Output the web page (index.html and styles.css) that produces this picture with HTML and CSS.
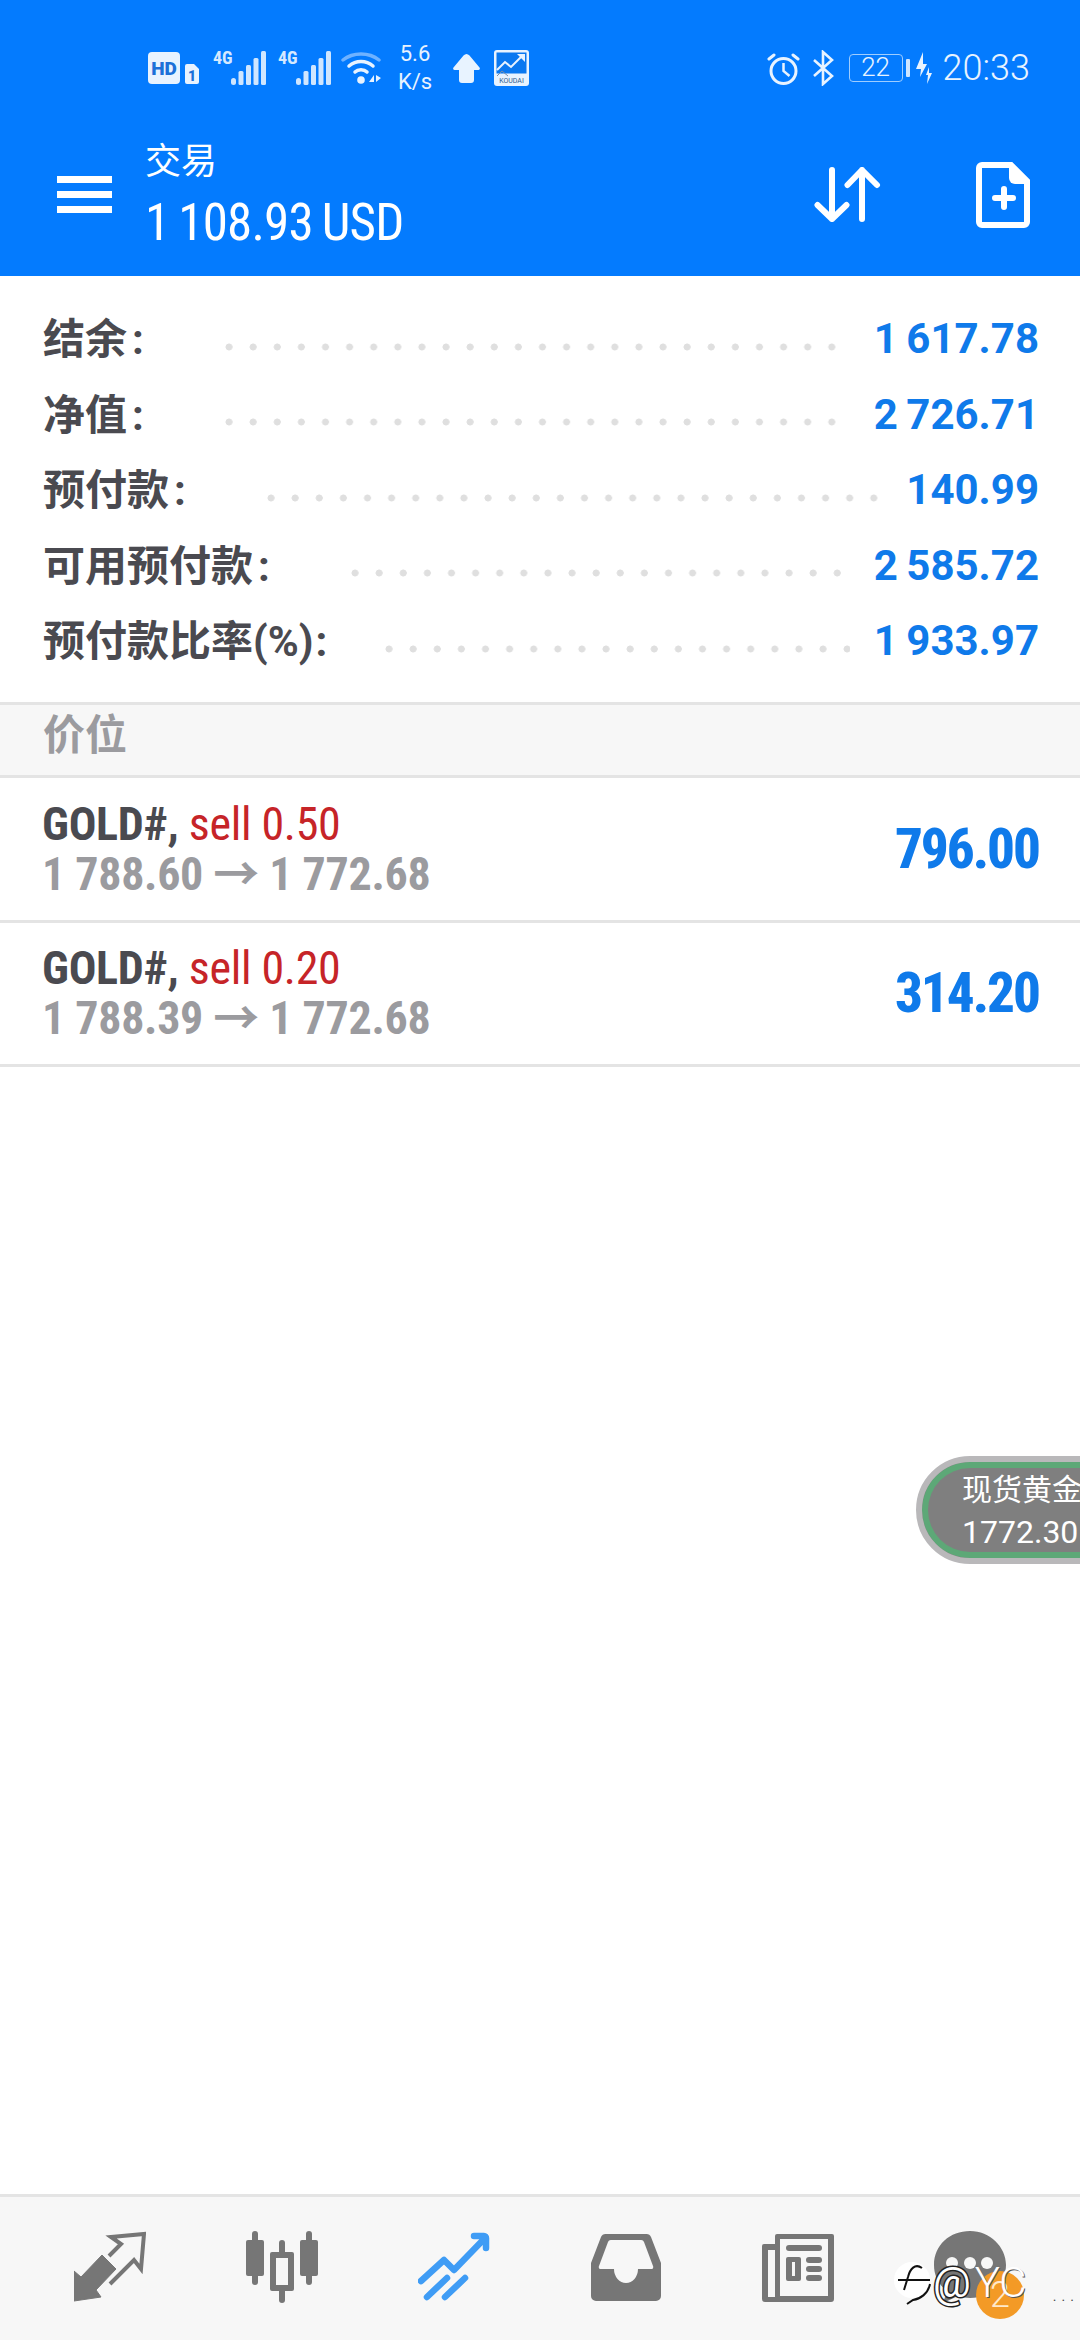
FILE: index.html
```html
<!DOCTYPE html>
<html>
  <head>
    <meta charset="UTF-8" />
    <link rel="stylesheet" href="styles.css">
  </head>
  <body>
    <div class="app">
      <div class="top-bar">
        <div class="status-bar">
          <div class="status-left">
            <svg class="ic-hd" viewBox="0 0 51 32">
              <rect x="0" y="0" width="32" height="32" rx="4" fill="#e8f3ff"/>
              <text x="16" y="23" class="hd-text">HD</text>
              <path d="M39 12h7l5 5v13a2 2 0 0 1-2 2H39a2 2 0 0 1-2-2V14a2 2 0 0 1 2-2z" fill="#e8f3ff"/>
              <text x="44" y="29" class="sim-text">1</text>
            </svg>
            <div class="signal">
              <span class="net">4G</span>
              <svg class="ic-bars" viewBox="0 0 35 34">
                <g fill="#cfe6ff">
                  <rect x="0" y="27" width="5" height="7" rx="2.5"/>
                  <rect x="7.5" y="20" width="5" height="14" rx="1.5"/>
                  <rect x="15" y="14" width="5" height="20" rx="1.5"/>
                  <rect x="22.5" y="7" width="5" height="27" rx="1.5"/>
                  <rect x="30" y="0" width="5" height="34" rx="1.5"/>
                </g>
              </svg>
            </div>
            <div class="signal">
              <span class="net">4G</span>
              <svg class="ic-bars" viewBox="0 0 35 34">
                <g fill="#cfe6ff">
                  <rect x="0" y="27" width="5" height="7" rx="2.5"/>
                  <rect x="7.5" y="20" width="5" height="14" rx="1.5"/>
                  <rect x="15" y="14" width="5" height="20" rx="1.5"/>
                  <rect x="22.5" y="7" width="5" height="27" rx="1.5"/>
                  <rect x="30" y="0" width="5" height="34" rx="1.5"/>
                </g>
              </svg>
            </div>
            <svg class="ic-wifi" viewBox="0 0 40 34">
              <path d="M2 9C12 1 28 1 38 9" fill="none" stroke="#6fb2ff" stroke-width="3.5" stroke-linecap="round"/>
              <path d="M8 15C15 9 25 9 32 15" fill="none" stroke="#e8f3ff" stroke-width="3.5" stroke-linecap="round"/>
              <path d="M14 21C17 18 23 18 26 21" fill="none" stroke="#e8f3ff" stroke-width="3.5" stroke-linecap="round"/>
              <circle cx="20" cy="29" r="3.8" fill="#e8f3ff"/>
              <path d="M28 31l5-7v7zM35 24l5 3-5 4z" fill="#e8f3ff"/>
            </svg>
            <div class="speed">5.6<br>K/s</div>
            <svg class="ic-up" viewBox="0 0 27 29">
              <path d="M13.5 0c1 0 2 .5 3 1.500l10 12c.8 1 .3 2.500-1 2.500H21v10a3 3 0 0 1-3 3H9a3 3 0 0 1-3-3V16H1.500c-1.300 0-1.800-1.500-1-2.500l10-12c1-1 2-1.500 3-1.500z" fill="#e8f3ff"/>
            </svg>
            <svg class="ic-koudai" viewBox="0 0 35 36">
              <rect x="0" y="0" width="35" height="36" rx="3" fill="#e8f3ff"/>
              <rect x="2.500" y="2.500" width="30" height="21" fill="#0a78f0"/>
              <path d="M3 20l8-8 6 5 12-12" fill="none" stroke="#e8f3ff" stroke-width="2"/>
              <path d="M23 4h8v8z" fill="#e8f3ff"/>
              <path d="M3 26l5-5 6 5" fill="none" stroke="#7a8ea6" stroke-width="1"/>
              <text x="17.500" y="33" class="koudai-text">KOUDAI</text>
            </svg>
          </div>
          <div class="status-right">
            <svg class="ic-alarm" viewBox="0 0 33 33">
              <circle cx="16.500" cy="19" r="12.500" fill="none" stroke="#e8f3ff" stroke-width="3"/>
              <path d="M16.500 11v8l6 5" fill="none" stroke="#e8f3ff" stroke-width="2.500"/>
              <path d="M2 7l5-4M31 7l-5-4" stroke="#e8f3ff" stroke-width="3" stroke-linecap="round"/>
            </svg>
            <svg class="ic-bt" viewBox="0 0 22 36">
              <path d="M2 10l18 16-9 8V2l9 8L2 26" fill="none" stroke="#e8f3ff" stroke-width="2.600"/>
            </svg>
            <div class="battery">
              <div class="battery-box">22</div>
              <div class="battery-cap"></div>
            </div>
            <svg class="ic-bolt" viewBox="0 0 17 32">
              <path d="M8 0L1 17h5l-1 8 7-13H8z" fill="#e8f3ff"/>
              <path d="M14 15l-3 8h2l-1 9 5-11h-3z" fill="#e8f3ff"/>
            </svg>
            <div class="clock">20:33</div>
          </div>
        </div>
        <div class="toolbar">
          <div class="menu-btn">
            <span></span><span></span><span></span>
          </div>
          <div class="toolbar-title">
            <div class="toolbar-name">交易</div>
            <div class="toolbar-sub"><span class="narrow">1 108.93 USD</span></div>
          </div>
          <div class="toolbar-actions">
            <svg class="ic-sort" viewBox="0 0 67 55">
              <path d="M18 3v49M3.500 38 18 52 32.500 38M48 52V3M33.500 18 48 3l15 15" fill="none" stroke="#fff" stroke-width="6" stroke-linecap="round" stroke-linejoin="round"/>
            </svg>
            <svg class="ic-doc" viewBox="0 0 54 66">
              <path d="M6 3h29l16 16v41a3 3 0 0 1-3 3H6a3 3 0 0 1-3-3V6a3 3 0 0 1 3-3z" fill="none" stroke="#fff" stroke-width="6"/>
              <path d="M33 2l20 20H39a6 6 0 0 1-6-6z" fill="#fff"/>
              <path d="M28 27v18M19 36h18" stroke="#fff" stroke-width="6" stroke-linecap="round"/>
            </svg>
          </div>
        </div>
      </div>

      <div class="summary">
        <div class="summary-row">
          <div class="summary-label">结余<span class="colon">:</span></div>
          <div class="dots"></div>
          <div class="summary-value">1 617.78</div>
        </div>
        <div class="summary-row">
          <div class="summary-label">净值<span class="colon">:</span></div>
          <div class="dots"></div>
          <div class="summary-value">2 726.71</div>
        </div>
        <div class="summary-row">
          <div class="summary-label">预付款<span class="colon">:</span></div>
          <div class="dots"></div>
          <div class="summary-value">140.99</div>
        </div>
        <div class="summary-row">
          <div class="summary-label">可用预付款<span class="colon">:</span></div>
          <div class="dots"></div>
          <div class="summary-value">2 585.72</div>
        </div>
        <div class="summary-row">
          <div class="summary-label">预付款比率(%)<span class="colon-tight">:</span></div>
          <div class="dots dots-tight"></div>
          <div class="summary-value">1 933.97</div>
        </div>
      </div>

      <div class="section-head">价位</div>

      <div class="position">
        <div class="position-info">
          <div class="position-title"><span class="narrow"><b>GOLD#,</b> <span class="sell">sell 0.50</span></span></div>
          <div class="position-price"><span class="narrow">1 788.60 → 1 772.68</span></div>
        </div>
        <div class="position-profit"><span class="narrow">796.00</span></div>
      </div>
      <div class="position">
        <div class="position-info">
          <div class="position-title"><span class="narrow"><b>GOLD#,</b> <span class="sell">sell 0.20</span></span></div>
          <div class="position-price"><span class="narrow">1 788.39 → 1 772.68</span></div>
        </div>
        <div class="position-profit"><span class="narrow">314.20</span></div>
      </div>

      <div class="spacer"></div>

      <div class="tab-bar">
        <svg class="tab-icon" viewBox="0 0 72 72">
          <path d="M0 70V40l7 6 21-22 14 14-20 21 5 7z" fill="#767676" stroke="#767676" stroke-width="1" stroke-linejoin="round"/>
          <path d="M35 25l12-12-10-7 33-3-3 35-7-9-24 24" fill="none" stroke="#767676" stroke-width="4"/>
        </svg>
        <svg class="tab-icon" viewBox="0 0 72 72">
          <g fill="#767676">
            <rect x="6" y="0" width="6" height="54" rx="3"/>
            <rect x="0" y="9" width="18" height="36" rx="2"/>
            <rect x="60" y="0" width="6" height="54" rx="3"/>
            <rect x="54" y="9" width="18" height="36" rx="2"/>
            <rect x="33" y="9" width="6" height="63" rx="3"/>
            <rect x="24" y="21" width="24" height="39" rx="2"/>
          </g>
          <rect x="30" y="27" width="12" height="27" fill="#f7f7f7"/>
        </svg>
        <svg class="tab-icon" viewBox="0 0 72 72">
          <path d="M3 50l23-21 10 10L67 7M56 5h10a2 2 0 0 1 2 2v10" fill="none" stroke="#3f9cf5" stroke-width="6.500" stroke-linecap="round" stroke-linejoin="round"/>
          <path d="M9 66l20-19M27 66l20-19" fill="none" stroke="#3f9cf5" stroke-width="6.500" stroke-linecap="round"/>
        </svg>
        <svg class="tab-icon" viewBox="0 0 72 72">
          <path d="M16 3h40a5 5 0 0 1 5 3l10 26v33a5 5 0 0 1-5 5H6a5 5 0 0 1-5-5V32L11 6a5 5 0 0 1 5-3z" fill="#767676"/>
          <path d="M21 9h30a3 3 0 0 1 3 2l9 24a2 2 0 0 1-2 3H48a12 14 0 0 1-24 0H11a2 2 0 0 1-2-3l9-24a3 3 0 0 1 3-2z" fill="#f7f7f7"/>
        </svg>
        <svg class="tab-icon" viewBox="0 0 72 72">
          <path d="M13 5a2 2 0 0 1 2-2h55a2 2 0 0 1 2 2v63a3 3 0 0 1-3 3H3a3 3 0 0 1-3-3V15a2 2 0 0 1 2-2h11z" fill="#767676"/>
          <rect x="6" y="19" width="7" height="47" fill="#f7f7f7"/>
          <rect x="18" y="8" width="48" height="57" fill="#f7f7f7"/>
          <g fill="#767676">
            <rect x="24" y="14" width="36" height="6" rx="3"/>
            <rect x="24" y="26" width="15" height="24" rx="2"/>
            <rect x="44" y="26" width="16" height="6" rx="3"/>
            <rect x="44" y="35" width="16" height="6" rx="3"/>
            <rect x="44" y="44" width="16" height="6" rx="3"/>
          </g>
          <rect x="30" y="31" width="3" height="14" fill="#f7f7f7"/>
        </svg>
        <div class="chat-tab">
          <svg class="tab-icon" viewBox="0 0 72 72">
            <path d="M36 0C16 0 0 14 0 34c0 11 5 20 13 26l-4 12 15-7c4 1 8 2 12 2 20 0 36-15 36-33S56 0 36 0z" fill="#767676"/>
            <circle cx="18" cy="32" r="6" fill="#f7f7f7"/>
            <circle cx="36" cy="32" r="6" fill="#f7f7f7"/>
            <circle cx="53" cy="32" r="6" fill="#f7f7f7"/>
          </svg>
          <div class="badge">2</div>
        </div>
      </div>

      <div class="float-quote">
        <div>现货黄金</div>
        <div class="float-price">1772.30</div>
      </div>
      <div class="watermark">
        <svg class="wm-bubble" viewBox="0 0 38 46">
          <circle cx="19" cy="21" r="18" fill="#ffffff"/>
          <path d="M29 9C22 4 17 10 15 18L11 31M5 21H37" fill="none" stroke="#111" stroke-width="2"/>
          <path d="M37 25C35 35 27 40 20 41L14 45" fill="none" stroke="#111" stroke-width="2"/>
        </svg>
        <span class="wm-at">@</span>
        <span class="wm-text">YC</span>
        <span class="wm-dots">. . .</span>
      </div>
    </div>
  </body>
</html>
```

FILE: styles.css
```css
:root {
  --blue: #047bfe;
  --value-blue: #0f7aea;
  --dark: #4a4a50;
  --gray: #9b9b9f;
  --line: #e4e4e4;
  --icon-gray: #767676;
}

* {
  margin: 0;
  padding: 0;
  box-sizing: border-box;
}

body {
  font-family: Roboto, "Noto Sans CJK SC", sans-serif;
  background-color: #ffffff;
  overflow: hidden;
}

.app {
  position: relative;
  width: 1080px;
  height: 2340px;
  display: flex;
  flex-direction: column;
  overflow: hidden;
}

/* narrow digits: the app uses Roboto Condensed */
.narrow {
  display: inline-block;
  font-stretch: 75%;
  white-space: pre;
}

.top-bar {
  height: 276px;
  background-color: var(--blue);
  color: #ffffff;
}

.status-bar {
  height: 90px;
  padding: 48px 50px 0 148px;
  display: flex;
  justify-content: space-between;
  align-items: flex-start;
  color: #e8f3ff;
}

.status-left,
.status-right {
  display: flex;
  align-items: center;
  height: 40px;
}

.ic-hd {
  width: 51px;
  height: 32px;
}

.hd-text {
  font-size: 19px;
  font-weight: 900;
  fill: #1c70d8;
  text-anchor: middle;
}

.sim-text {
  font-size: 14px;
  font-weight: 900;
  fill: #1c70d8;
  text-anchor: middle;
}

.koudai-text {
  font-size: 7px;
  fill: #2c5a8e;
  text-anchor: middle;
}

.signal {
  position: relative;
  width: 53px;
  height: 34px;
  margin-left: 14px;
  display: flex;
  justify-content: flex-end;
}

.signal + .signal {
  margin-left: 12px;
}

.net {
  position: absolute;
  left: 0;
  top: -4px;
  font-size: 18px;
  font-weight: 700;
  font-stretch: 75%;
  color: #d5e9ff;
}

.ic-bars {
  width: 35px;
  height: 34px;
}

.ic-wifi {
  width: 40px;
  height: 34px;
  margin-left: 10px;
}

.speed {
  width: 44px;
  margin-left: 12px;
  font-size: 22px;
  line-height: 28px;
  text-align: center;
}

.ic-up {
  width: 27px;
  height: 29px;
  margin-left: 16px;
}

.ic-koudai {
  width: 35px;
  height: 36px;
  margin-left: 14px;
}

.ic-alarm {
  width: 33px;
  height: 33px;
}

.ic-bt {
  width: 22px;
  height: 36px;
  margin-left: 12px;
}

.battery {
  display: flex;
  align-items: center;
  margin-left: 15px;
}

.battery-box {
  width: 54px;
  height: 28px;
  border: 1.5px solid #9fcdff;
  border-radius: 4px;
  font-size: 26px;
  font-weight: 300;
  line-height: 25px;
  text-align: center;
}

.battery-cap {
  width: 4px;
  height: 18px;
  margin-left: 3px;
  background-color: #cfe5ff;
  border-radius: 1px;
}

.ic-bolt {
  width: 17px;
  height: 32px;
  margin-left: 5px;
}

.clock {
  font-size: 36px;
  font-weight: 300;
  margin-left: 11px;
}

.toolbar {
  height: 186px;
  display: flex;
  align-items: flex-start;
}

.menu-btn {
  width: 55px;
  margin: 86px 0 0 57px;
  display: flex;
  flex-direction: column;
  gap: 8px;
}

.menu-btn span {
  display: block;
  height: 7px;
  background-color: #ffffff;
}

.toolbar-title {
  margin: 52px 0 0 33px;
  flex: 1;
}

.toolbar-name {
  font-size: 36px;
  line-height: 40px;
}

.toolbar-sub {
  font-size: 51px;
  line-height: 60px;
  margin-top: 11px;
  letter-spacing: -0.8px;
  word-spacing: -2px;
}

.toolbar-actions {
  display: flex;
  margin: 77px 50px 0 0;
  gap: 95px;
  align-items: flex-start;
}

.ic-sort {
  width: 67px;
  height: 55px;
}

.ic-doc {
  width: 54px;
  height: 66px;
  margin-top: -5px;
}

.summary {
  height: 426px;
  padding-top: 25px;
}

.summary-row {
  height: 75.5px;
  padding: 0 41px 0 43px;
  display: flex;
  align-items: center;
}

.summary-label {
  font-size: 42px;
  font-weight: 700;
  color: var(--dark);
  margin-top: -6px;
}

.colon {
  margin-left: 5px;
}

.colon-tight {
  margin-left: 2px;
}

.dots {
  flex: 1;
  height: 8px;
  margin: 16px 24px 0 81px;
  background-image: radial-gradient(circle at 4px 4px, #dfdfdf 3.2px, transparent 3.8px);
  background-size: 24.12px 8px;
  background-repeat: repeat-x;
}

.dots-tight {
  margin-left: 58px;
}

.summary-value {
  font-size: 42px;
  font-weight: 700;
  word-spacing: -2px;
  color: var(--value-blue);
}

.section-head {
  height: 76px;
  padding-left: 43px;
  font-size: 42px;
  font-weight: 700;
  line-height: 62px;
  color: var(--gray);
  background-color: #f7f7f7;
  border-top: 3px solid var(--line);
  border-bottom: 3px solid var(--line);
}

.position {
  height: 144.5px;
  padding: 0 41px 0 42px;
  display: flex;
  align-items: center;
  justify-content: space-between;
  border-bottom: 3px solid var(--line);
}

.position-title {
  font-size: 46px;
  line-height: 50px;
  letter-spacing: -0.3px;
}

.position-title b {
  color: var(--dark);
  font-weight: 700;
}

.sell {
  color: #c62428;
}

.position-price {
  font-size: 46px;
  line-height: 50px;
  font-weight: 700;
  letter-spacing: -0.3px;
  color: var(--gray);
}

.position-profit {
  font-size: 55px;
  font-weight: 800;
  letter-spacing: -2px;
  color: var(--value-blue);
}

.spacer {
  flex: 1;
}

.tab-bar {
  height: 146px;
  padding: 34px 74px 0 74px;
  display: flex;
  justify-content: space-between;
  align-items: flex-start;
  background-color: #f7f7f7;
  border-top: 3px solid var(--line);
}

.tab-icon {
  display: block;
  width: 72px;
  height: 72px;
}

.chat-tab {
  position: relative;
}

.badge {
  position: absolute;
  right: -18px;
  bottom: -16px;
  width: 48px;
  height: 48px;
  border-radius: 50%;
  background-color: #f39a26;
  color: #ffe9c9;
  font-size: 36px;
  font-weight: 300;
  line-height: 48px;
  text-align: center;
}

.float-quote {
  position: absolute;
  left: 916px;
  top: 1456px;
  width: 200px;
  height: 108px;
  padding: 7px 0 0 40px;
  border-radius: 54px 0 0 54px;
  background-color: #7f7f7f;
  border: 6px solid #b9b8ba;
  box-shadow: inset 0 0 0 6px #5da877;
  color: #ffffff;
  font-size: 30px;
  line-height: 42px;
  white-space: nowrap;
}

.float-price {
  font-size: 32px;
}

.watermark {
  position: absolute;
  left: 893px;
  top: 2257px;
  display: flex;
  align-items: center;
  height: 50px;
  color: #ffffff;
  font-size: 42px;
  font-weight: 300;
}

.wm-bubble {
  width: 38px;
  height: 46px;
}

.wm-at {
  margin-left: 2px;
  font-weight: 400;
  -webkit-text-stroke: 3px #222222;
  paint-order: stroke fill;
}

.wm-text {
  margin-left: 4px;
  text-shadow: 1px 1px 0 #555555;
}

.wm-dots {
  font-size: 18px;
  color: #444444;
  margin-left: 26px;
  margin-top: 24px;
}
```
